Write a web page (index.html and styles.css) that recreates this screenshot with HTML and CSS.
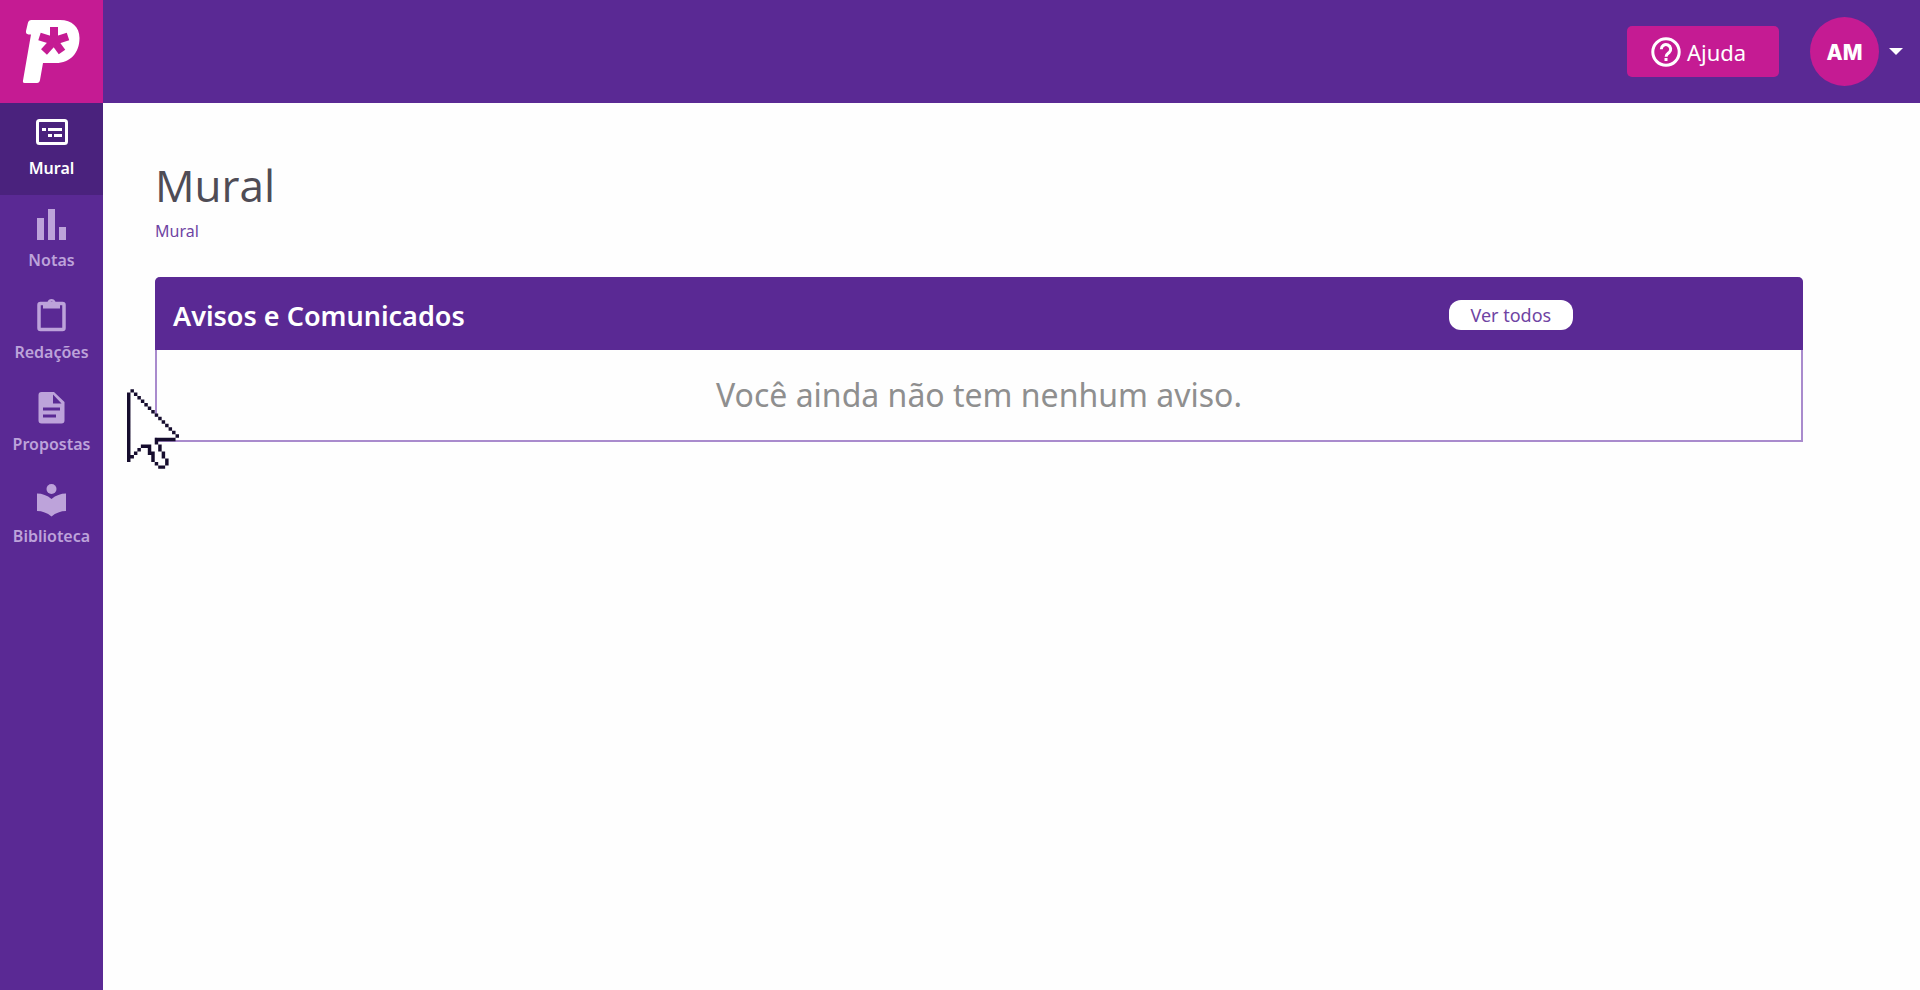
FILE: index.html
```html
<!DOCTYPE html>
<html lang="pt-BR">
<head>
<meta charset="utf-8">
<title>Mural</title>
<link rel="stylesheet" href="styles.css">
</head>
<body>
<div class="app">
  <aside class="sidebar">
    <a class="logo" href="#" aria-label="Início">
      <svg viewBox="0 0 103 103" aria-hidden="true">
        <path fill="#fff" d="M31 20H60C72 20 79.500 27 79.500 38C79.500 53 70 63 56 63H43L40 80Q39.500 83 37 83H24.500Q22.500 83 23 80.500L31 34.500H28.500Q25.500 34 26 31L28 22.500Q28.500 20 31 20Z"/>
        <g stroke="#c51b93" stroke-width="8">
          <path d="M54 41V27"/><path d="M54 41L68 36.500"/><path d="M54 41L62 52"/><path d="M54 41L44 52"/><path d="M54 41L39.500 36.500"/>
        </g>
      </svg>
    </a>
    <nav class="nav">
      <a class="nav-item active" href="#">
        <svg class="nav-icon" viewBox="1 0 36 36" aria-hidden="true"><rect x="4.500" y="6.500" width="29" height="23" rx="2" fill="none" stroke="currentColor" stroke-width="3"/><path fill="currentColor" d="M9 14h4v3H9zM15 14h14v3H15zM15 20h4v3h-4zM21 20h8v3h-8z"/></svg>
        <span>Mural</span>
      </a>
      <a class="nav-item" href="#">
        <svg class="nav-icon" viewBox="1 0 36 36" aria-hidden="true"><path fill="currentColor" d="M4 12h7v22H4zM15 3h7v31h-7zM26 21h7v13h-7z"/></svg>
        <span>Notas</span>
      </a>
      <a class="nav-item" href="#">
        <svg class="nav-icon" viewBox="1 0 36 36" aria-hidden="true"><rect x="6" y="5.500" width="25" height="26" rx="1.500" fill="none" stroke="currentColor" stroke-width="3.500"/><path fill="currentColor" fill-rule="evenodd" d="M10 4h4.500a4.200 4.200 0 0 1 8 0H27v6.500H10zM18.500 3.500a1.500 1.500 0 1 0 .01 3a1.500 1.500 0 1 0-.01-3z"/></svg>
        <span>Redações</span>
      </a>
      <a class="nav-item" href="#">
        <svg class="nav-icon" viewBox="1 0 36 36" aria-hidden="true"><path fill="currentColor" fill-rule="evenodd" d="M8.500 2H21L31.500 12V30.500Q31.500 33.500 28.500 33.500H8.500Q5.500 33.500 5.500 30.500V5Q5.500 2 8.500 2zM20 4.500V13.500H28.500zM10 17.500v3h17v-3zM10 24.500v3h13v-3z"/></svg>
        <span>Propostas</span>
      </a>
      <a class="nav-item" href="#">
        <svg class="nav-icon" viewBox="1 0 36 36" aria-hidden="true"><circle cx="18.500" cy="7" r="5" fill="currentColor"/><path fill="currentColor" d="M4 11.500Q12 11.500 18.500 17Q25 11.500 33 11.500V29Q25 29 18.500 34.500Q12 29 4 29z"/></svg>
        <span>Biblioteca</span>
      </a>
    </nav>
  </aside>
  <div class="page">
    <header class="topbar">
      <button class="help" type="button">
        <svg class="help-icon" viewBox="0 0 30 30" aria-hidden="true"><g fill="none" stroke="currentColor"><circle cx="15" cy="15" r="13.200" stroke-width="3"/><path stroke-width="3" d="M10.300 12.200a4.700 4.500 0 1 1 7.800 3.300c-1.800 1.400-3 2-3 4.200"/></g><path fill="currentColor" d="M13.500 21h3v3h-3z"/></svg>
        <span>Ajuda</span>
      </button>
      <button class="account" type="button">
        <span class="avatar">AM</span>
        <svg class="caret" viewBox="0 0 14 7" aria-hidden="true"><path fill="#fff" d="M0 0h14L7 7z"/></svg>
      </button>
    </header>
    <main class="content">
      <h1 class="title">Mural</h1>
      <a class="crumb" href="#">Mural</a>
      <section class="panel">
        <div class="panel-head">
          <h2 class="panel-title">Avisos e Comunicados</h2>
          <button class="see-all" type="button">Ver todos</button>
        </div>
        <p class="panel-body">Você ainda não tem nenhum aviso.</p>
      </section>
    </main>
  </div>
</div>
<svg class="cursor" viewBox="0 0 15 23" aria-hidden="true">
  <path fill="#fff" d="M1 1h1v1h1v1h1v1h1v1h1v1h1v1h1v1h1v1h1v1h1v1h1v1h1v1h1v1H8v2h1v2h1v2h1v2H9v-1H8v-2H7v-3H4v1H3v1H2v1H1z"/>
  <path fill="#160d2e" d="M0 1h1v18h1v1H1v1H0zM1 0h1v1H1zM2 1h1v1H2zM3 2h1v1H3zM4 3h1v1H4zM5 4h1v1H5zM6 5h1v1H6zM7 6h1v1H7zM8 7h1v1H8zM9 8h1v1H9zM10 9h1v1h-1zM11 10h1v1h-1zM12 11h1v1h-1zM13 12h1v1h-1zM14 13h1v1h-1zM8 14h6v1H9v1H8zM9 16h1v2H9zM10 18h1v2h-1zM11 20h1v2h-1zM9 22h2v1H9zM8 21h1v1H8zM7 18h1v3H7zM4 16h3v3H6v-2H4zM3 17h1v1H3zM2 18h1v1H2z"/>
</svg>
</body>
</html>
```
FILE: styles.css
```css
* {
  box-sizing: border-box;
}

body {
  margin: 0;
  background: #fefefe;
  font-family: "Noto Sans", "Open Sans", sans-serif;
}

a {
  text-decoration: none;
}

button {
  border: 0;
  padding: 0;
  font-family: inherit;
}

.app {
  display: flex;
  min-height: 100vh;
}

.sidebar {
  flex: 0 0 103px;
  background: #5a2994;
}

.logo {
  display: block;
  height: 103px;
  background: #c51b93;
}

.logo svg {
  display: block;
}

.nav {
  display: grid;
  grid-auto-rows: 92px;
}

.nav-item {
  display: flex;
  flex-direction: column;
  align-items: center;
  padding-top: 11px;
  gap: 7px;
  color: #bda3da;
  font-size: 16px;
  line-height: 22px;
  font-weight: 600;
}

.nav-item.active {
  background: #4a227d;
  color: #fff;
}

.nav-icon {
  width: 36px;
  height: 36px;
}

.page {
  flex: 1;
}

.topbar {
  display: flex;
  align-items: center;
  justify-content: flex-end;
  gap: 31px;
  height: 103px;
  padding-right: 17px;
  background: #5a2994;
}

.help {
  display: flex;
  align-items: center;
  gap: 6px;
  height: 51px;
  width: 152px;
  padding-left: 24px;
  border-radius: 5px;
  background: #c51b93;
  color: #fff;
  font-size: 22px;
  line-height: 28px;
}

.help-icon {
  width: 30px;
  height: 30px;
}

.account {
  display: flex;
  align-items: center;
  gap: 10px;
  background: none;
}

.avatar {
  display: grid;
  place-items: center;
  width: 69px;
  height: 69px;
  padding-top: 2px;
  border-radius: 50%;
  background: #c51b93;
  color: #fff;
  font-family: Inter, sans-serif;
  font-size: 21px;
  font-weight: 800;
}

.caret {
  width: 14px;
  height: 7px;
}

.content {
  padding: 52px 117px 52px 52px;
}

.title {
  margin: 0;
  color: #4f4c55;
  font-family: "Open Sans", sans-serif;
  font-size: 44px;
  line-height: 60px;
  font-weight: 400;
}

.crumb {
  display: block;
  margin-top: 4px;
  color: #6f44a3;
  font-size: 16px;
  line-height: 24px;
}

.panel {
  margin-top: 34px;
  border: 2px solid #a98bcd;
  border-top: 0;
  border-radius: 5px 5px 0 0;
}

.panel-head {
  display: flex;
  align-items: center;
  justify-content: space-between;
  height: 73px;
  margin: 0 -2px;
  padding-top: 3px;
  padding-left: 18px;
  padding-right: 14%;
  border-radius: 5px 5px 0 0;
  background: #5a2994;
}

.panel-title {
  margin: 0;
  color: #fff;
  font-size: 27px;
  font-weight: 600;
}

.see-all {
  height: 30px;
  width: 124px;
  border-radius: 12px;
  background: #fff;
  color: #6f44a3;
  font-size: 18px;
}

.panel-body {
  margin: 0;
  padding: 20px 0;
  color: #8f8f8f;
  font-size: 32px;
  line-height: 50px;
  text-align: center;
}

.cursor {
  position: absolute;
  left: 127px;
  top: 389px;
  width: 52px;
  height: 80px;
}
```
